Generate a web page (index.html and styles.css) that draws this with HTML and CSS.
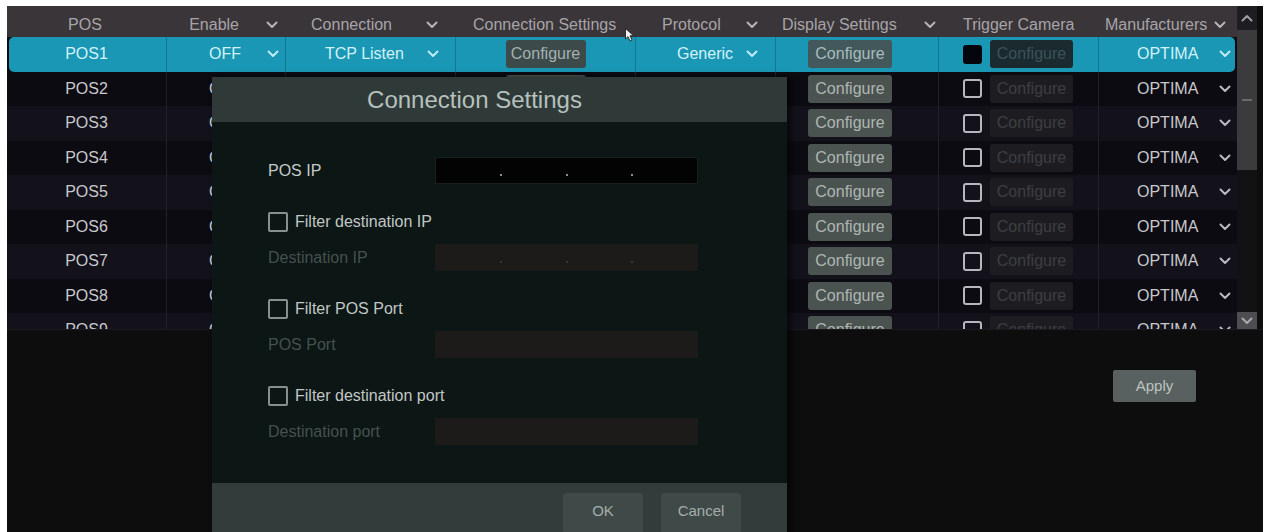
FILE: index.html
```html
<!DOCTYPE html>
<html>
<head>
<meta charset="utf-8">
<title>POS</title>
<link rel="stylesheet" href="styles.css">
</head>
<body>
<div class="app">
  <div class="top">
    <div class="table">
      <div class="hd">
        <div class="h h1">POS</div>
        <div class="h h2"><span>Enable</span><svg class="chev" viewBox="0 0 12 8"><path d="M1.5 1.5 L6 6 L10.5 1.5"/></svg></div>
        <div class="h h3"><span>Connection</span><svg class="chev" viewBox="0 0 12 8"><path d="M1.5 1.5 L6 6 L10.5 1.5"/></svg></div>
        <div class="h h4"><span>Connection Settings</span></div>
        <div class="h h5"><span>Protocol</span><svg class="chev" viewBox="0 0 12 8"><path d="M1.5 1.5 L6 6 L10.5 1.5"/></svg></div>
        <div class="h h6"><span>Display Settings</span><svg class="chev" viewBox="0 0 12 8"><path d="M1.5 1.5 L6 6 L10.5 1.5"/></svg></div>
        <div class="h h7"><span>Trigger Camera</span></div>
        <div class="h h8"><span>Manufacturers</span><svg class="chev" viewBox="0 0 12 8"><path d="M1.5 1.5 L6 6 L10.5 1.5"/></svg></div>
      </div>
      <div class="body">
        <div class="row sel">
          <div class="c c1">POS1</div>
          <div class="c c2"><span>OFF</span><svg class="chev" viewBox="0 0 12 8"><path d="M1.5 1.5 L6 6 L10.5 1.5"/></svg></div>
          <div class="c c3"><span>TCP Listen</span><svg class="chev" viewBox="0 0 12 8"><path d="M1.5 1.5 L6 6 L10.5 1.5"/></svg></div>
          <div class="c c4"><div class="btn b-conn">Configure</div></div>
          <div class="c c5"><span>Generic</span><svg class="chev" viewBox="0 0 12 8"><path d="M1.5 1.5 L6 6 L10.5 1.5"/></svg></div>
          <div class="c c6"><div class="btn b-disp">Configure</div></div>
          <div class="c c7"><span class="cb"></span><div class="btn b-trig">Configure</div></div>
          <div class="c c8"><span>OPTIMA</span><svg class="chev" viewBox="0 0 12 8"><path d="M1.5 1.5 L6 6 L10.5 1.5"/></svg></div>
        </div>
        <div class="row">
          <div class="c c1">POS2</div>
          <div class="c c2"><span>OFF</span><svg class="chev" viewBox="0 0 12 8"><path d="M1.5 1.5 L6 6 L10.5 1.5"/></svg></div>
          <div class="c c3"></div>
          <div class="c c4"><div class="btn b-conn"></div></div>
          <div class="c c5"></div>
          <div class="c c6"><div class="btn b-disp">Configure</div></div>
          <div class="c c7"><span class="cb"></span><div class="btn b-trig">Configure</div></div>
          <div class="c c8"><span>OPTIMA</span><svg class="chev" viewBox="0 0 12 8"><path d="M1.5 1.5 L6 6 L10.5 1.5"/></svg></div>
        </div>
        <div class="row">
          <div class="c c1">POS3</div>
          <div class="c c2"><span>OFF</span><svg class="chev" viewBox="0 0 12 8"><path d="M1.5 1.5 L6 6 L10.5 1.5"/></svg></div>
          <div class="c c3"></div>
          <div class="c c4"><div class="btn b-conn"></div></div>
          <div class="c c5"></div>
          <div class="c c6"><div class="btn b-disp">Configure</div></div>
          <div class="c c7"><span class="cb"></span><div class="btn b-trig">Configure</div></div>
          <div class="c c8"><span>OPTIMA</span><svg class="chev" viewBox="0 0 12 8"><path d="M1.5 1.5 L6 6 L10.5 1.5"/></svg></div>
        </div>
        <div class="row">
          <div class="c c1">POS4</div>
          <div class="c c2"><span>OFF</span><svg class="chev" viewBox="0 0 12 8"><path d="M1.5 1.5 L6 6 L10.5 1.5"/></svg></div>
          <div class="c c3"></div>
          <div class="c c4"><div class="btn b-conn"></div></div>
          <div class="c c5"></div>
          <div class="c c6"><div class="btn b-disp">Configure</div></div>
          <div class="c c7"><span class="cb"></span><div class="btn b-trig">Configure</div></div>
          <div class="c c8"><span>OPTIMA</span><svg class="chev" viewBox="0 0 12 8"><path d="M1.5 1.5 L6 6 L10.5 1.5"/></svg></div>
        </div>
        <div class="row">
          <div class="c c1">POS5</div>
          <div class="c c2"><span>OFF</span><svg class="chev" viewBox="0 0 12 8"><path d="M1.5 1.5 L6 6 L10.5 1.5"/></svg></div>
          <div class="c c3"></div>
          <div class="c c4"><div class="btn b-conn"></div></div>
          <div class="c c5"></div>
          <div class="c c6"><div class="btn b-disp">Configure</div></div>
          <div class="c c7"><span class="cb"></span><div class="btn b-trig">Configure</div></div>
          <div class="c c8"><span>OPTIMA</span><svg class="chev" viewBox="0 0 12 8"><path d="M1.5 1.5 L6 6 L10.5 1.5"/></svg></div>
        </div>
        <div class="row">
          <div class="c c1">POS6</div>
          <div class="c c2"><span>OFF</span><svg class="chev" viewBox="0 0 12 8"><path d="M1.5 1.5 L6 6 L10.5 1.5"/></svg></div>
          <div class="c c3"></div>
          <div class="c c4"><div class="btn b-conn"></div></div>
          <div class="c c5"></div>
          <div class="c c6"><div class="btn b-disp">Configure</div></div>
          <div class="c c7"><span class="cb"></span><div class="btn b-trig">Configure</div></div>
          <div class="c c8"><span>OPTIMA</span><svg class="chev" viewBox="0 0 12 8"><path d="M1.5 1.5 L6 6 L10.5 1.5"/></svg></div>
        </div>
        <div class="row">
          <div class="c c1">POS7</div>
          <div class="c c2"><span>OFF</span><svg class="chev" viewBox="0 0 12 8"><path d="M1.5 1.5 L6 6 L10.5 1.5"/></svg></div>
          <div class="c c3"></div>
          <div class="c c4"><div class="btn b-conn"></div></div>
          <div class="c c5"></div>
          <div class="c c6"><div class="btn b-disp">Configure</div></div>
          <div class="c c7"><span class="cb"></span><div class="btn b-trig">Configure</div></div>
          <div class="c c8"><span>OPTIMA</span><svg class="chev" viewBox="0 0 12 8"><path d="M1.5 1.5 L6 6 L10.5 1.5"/></svg></div>
        </div>
        <div class="row">
          <div class="c c1">POS8</div>
          <div class="c c2"><span>OFF</span><svg class="chev" viewBox="0 0 12 8"><path d="M1.5 1.5 L6 6 L10.5 1.5"/></svg></div>
          <div class="c c3"></div>
          <div class="c c4"><div class="btn b-conn"></div></div>
          <div class="c c5"></div>
          <div class="c c6"><div class="btn b-disp">Configure</div></div>
          <div class="c c7"><span class="cb"></span><div class="btn b-trig">Configure</div></div>
          <div class="c c8"><span>OPTIMA</span><svg class="chev" viewBox="0 0 12 8"><path d="M1.5 1.5 L6 6 L10.5 1.5"/></svg></div>
        </div>
        <div class="row">
          <div class="c c1">POS9</div>
          <div class="c c2"><span>OFF</span><svg class="chev" viewBox="0 0 12 8"><path d="M1.5 1.5 L6 6 L10.5 1.5"/></svg></div>
          <div class="c c3"></div>
          <div class="c c4"><div class="btn b-conn"></div></div>
          <div class="c c5"></div>
          <div class="c c6"><div class="btn b-disp">Configure</div></div>
          <div class="c c7"><span class="cb"></span><div class="btn b-trig">Configure</div></div>
          <div class="c c8"><span>OPTIMA</span><svg class="chev" viewBox="0 0 12 8"><path d="M1.5 1.5 L6 6 L10.5 1.5"/></svg></div>
        </div>
      </div>
    </div>
    <div class="scrollbar">
      <div class="sb-up"><svg class="chev up" viewBox="0 0 12 8"><path d="M1.5 6.5 L6 2 L10.5 6.5"/></svg></div>
      <div class="sb-thumb"><span class="grip"></span></div>
      <div class="sb-track"></div>
      <div class="sb-down"><svg class="chev" viewBox="0 0 12 8"><path d="M1.5 1.5 L6 6 L10.5 1.5"/></svg></div>
    </div>
  </div>
  <div class="bottom">
    <div class="apply">Apply</div>
  </div>

  <div class="dialog">
    <div class="dlg-title">Connection Settings</div>
    <div class="dlg-body">
      <div class="field">
        <span class="lbl">POS IP</span>
        <div class="ip"><i></i><i></i><i></i></div>
      </div>
      <div class="check"><span class="box"></span><span>Filter destination IP</span></div>
      <div class="field off">
        <span class="lbl">Destination IP</span>
        <div class="ip dis"><i></i><i></i><i></i></div>
      </div>
      <div class="check"><span class="box"></span><span>Filter POS Port</span></div>
      <div class="field off">
        <span class="lbl">POS Port</span>
        <div class="ip dis"></div>
      </div>
      <div class="check"><span class="box"></span><span>Filter destination port</span></div>
      <div class="field off">
        <span class="lbl">Destination port</span>
        <div class="ip dis"></div>
      </div>
    </div>
    <div class="dlg-foot">
      <div class="fbtn">OK</div>
      <div class="fbtn">Cancel</div>
    </div>
  </div>

  <svg class="cursor" viewBox="0 0 10 14"><path d="M0.5 0.5 L0.5 11 L3 8.6 L5 13 L7 12 L5 7.8 L8.6 7.8 Z"/></svg>
</div>
</body>
</html>
```

FILE: styles.css
```css
* { box-sizing: border-box; }

html, body {
  margin: 0;
  background: #ffffff;
}

body {
  padding: 6px 2px 0 7px;
  font-family: "Liberation Sans", Arial, sans-serif;
  font-size: 16px;
}

.app {
  --cols: 159px 119px 170px 180px 140px 163px 160px 139px;
  position: relative;
  height: 526px;
  background: #0d0d0d;
  overflow: hidden;
}

.top {
  display: flex;
  height: 323px;
}

.table {
  width: 1230px;
  display: flex;
  flex-direction: column;
  background: #0c0b12;
}

/* header */
.hd {
  display: grid;
  grid-template-columns: var(--cols);
  height: 31px;
  padding-top: 6px;
  background: #3a3539;
  color: #a7a4a8;
  flex: none;
}

.h {
  display: flex;
  align-items: center;
  white-space: nowrap;
}

.h1 { justify-content: center; padding-right: 3px; }
.h2 { justify-content: flex-end; padding-right: 7px; gap: 27px; }
.h3 { justify-content: flex-end; padding-right: 17px; gap: 34px; }
.h4 { padding-left: 18px; }
.h5 { padding-left: 27px; gap: 25px; }
.h6 { padding-left: 7px; gap: 27px; }
.h7 { padding-left: 25px; }
.h8 { padding-left: 7px; gap: 7px; }

.chev {
  width: 12px;
  height: 8px;
  flex: none;
  fill: none;
  stroke: currentColor;
  stroke-width: 2;
  stroke-linecap: round;
  stroke-linejoin: round;
}

.hd .chev { color: #b6b3b7; }

/* body rows */
.body {
  flex: 1;
  overflow: hidden;
}

.row {
  position: relative;
  display: grid;
  grid-template-columns: var(--cols);
  height: 34.5px;
  color: #c8c8cd;
  background: #0c0b12;
}

.row:nth-child(odd) { background: #13121b; }

.row.sel { background: transparent; color: #d3f1f8; }
.row.sel::before {
  content: "";
  position: absolute;
  top: 0;
  bottom: 0;
  left: 2px;
  right: 2px;
  background: #1a97b4;
  border-radius: 5px;
}

.c {
  position: relative;
  display: flex;
  align-items: center;
  white-space: nowrap;
  border-left: 1px solid #22212b;
}

.c1 { justify-content: center; border-left: none; }
.c2 { justify-content: flex-end; padding-right: 6px; gap: 26px; }
.c3 { padding-left: 39px; gap: 23px; }
.c4 { justify-content: center; }
.c5 { padding-left: 41px; gap: 13px; }
.c6 { padding-left: 32px; }
.c7 { padding-left: 24px; gap: 8px; }
.c8 { padding-left: 38px; gap: 21px; }

.row.sel .c { border-left-color: rgba(10, 60, 80, 0.35); }
.row .chev { color: #b9b9c2; }
.row.sel .chev { color: #bfeaf5; }

.btn {
  height: 28px;
  line-height: 28px;
  border-radius: 3px;
  text-align: center;
  white-space: nowrap;
}

.b-conn { width: 80px; background: #4b5351; color: #aeb6b3; }
.b-disp { width: 84px; background: #4b5351; color: #aeb6b3; }
.b-trig { width: 83px; background: #1d1d21; color: #3d3d44; }

.row.sel .b-conn { background: #3c4a4a; color: #a4b1b1; }
.row.sel .b-disp { background: #42585b; color: #a9bcbd; }
.row.sel .b-trig { background: #1b2a2f; color: #3d5257; }

.cb {
  width: 19px;
  height: 19px;
  flex: none;
  border: 2px solid #b7b7be;
  border-radius: 3px;
}

.row.sel .cb { background: #05050e; border-color: #05050e; }

/* scrollbar */
.scrollbar {
  width: 20px;
  display: flex;
  flex-direction: column;
  background: #111114;
}

.sb-up {
  height: 24px;
  display: flex;
  align-items: center;
  justify-content: center;
  background: #1e1d21;
  color: #9c9ca2;
}

.sb-thumb {
  height: 140px;
  display: flex;
  align-items: center;
  justify-content: center;
  background: #3b3b3e;
}

.grip {
  width: 10px;
  height: 2px;
  background: #6a6a6e;
}

.sb-track { flex: 1; background: #121214; }

.sb-down {
  height: 17px;
  display: flex;
  align-items: center;
  justify-content: center;
  background: #4d4d52;
  color: #a8a8ae;
}

/* bottom area */
.bottom {
  height: 203px;
  display: flex;
  justify-content: flex-end;
  padding: 40px 67px 0 0;
  background: #0d0d0d;
  border-top: 1px solid #1a1a1f;
}

.apply {
  width: 83px;
  height: 32px;
  line-height: 32px;
  text-align: center;
  background: #58615f;
  color: #bcc4c2;
  font-size: 15px;
  border-radius: 2px;
}

/* dialog */
.dialog {
  position: absolute;
  left: 205px;
  top: 71px;
  width: 575px;
  height: 470px;
  display: flex;
  flex-direction: column;
  background: #0b1615;
  box-shadow: 4px 0 6px rgba(0, 0, 0, 0.6);
}

.dlg-title {
  height: 45px;
  flex: none;
  display: flex;
  align-items: center;
  justify-content: center;
  padding-right: 50px;
  background: #2f3a38;
  color: #b6c0bd;
  font-size: 24px;
}

.dlg-body {
  height: 361px;
  flex: none;
  padding: 35px 0 0 56px;
  display: flex;
  flex-direction: column;
}

.field {
  height: 27px;
  display: flex;
  align-items: center;
  color: #c5cac9;
}

.field .lbl { width: 167px; }
.field.off { color: #46504e; margin-top: 12px; }

.ip {
  width: 263px;
  height: 27px;
  display: flex;
  justify-content: space-evenly;
  align-items: center;
  background: #030303;
  border: 1px solid #17201f;
}

.ip i {
  width: 2px;
  height: 2px;
  margin-top: 8px;
  background: #8e8e8e;
}

.ip.dis { background: #1d1a1a; border-color: #1d1a1a; }
.ip.dis i { background: #3a3434; }

.check {
  height: 20px;
  margin-top: 28px;
  display: flex;
  align-items: center;
  gap: 7px;
  color: #c2c7c6;
}

.check .box {
  width: 20px;
  height: 20px;
  border: 2px solid #86908e;
  border-radius: 2px;
}

.dlg-foot {
  flex: 1;
  display: flex;
  justify-content: flex-end;
  gap: 18px;
  padding: 10px 46px 0 0;
  background: #323d3b;
}

.fbtn {
  width: 80px;
  height: 40px;
  line-height: 36px;
  text-align: center;
  border-radius: 3px;
  background: #3f4a48;
  color: #a5adab;
  font-size: 15px;
}

.cursor {
  position: absolute;
  left: 618px;
  top: 22px;
  width: 10px;
  height: 14px;
  fill: #f4f4f4;
  stroke: #111;
  stroke-width: 0.8;
}
```
